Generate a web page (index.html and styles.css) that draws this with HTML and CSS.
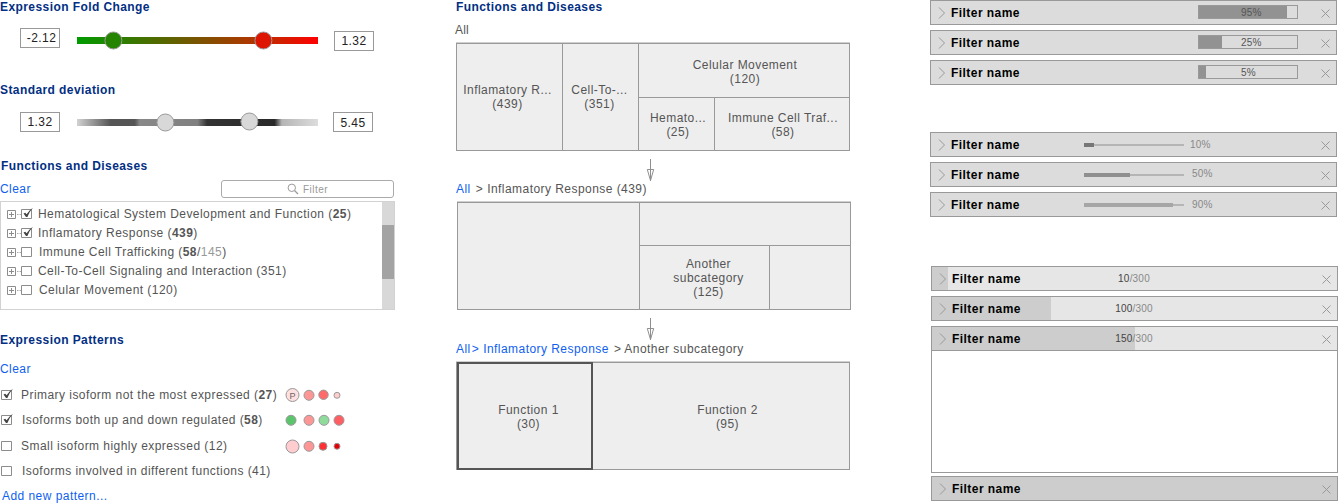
FILE: index.html
```
<!DOCTYPE html>
<html lang="en">
<head>
<meta charset="utf-8">
<title>Filters</title>
<link rel="stylesheet" href="styles.css">
</head>
<body>
<svg width="0" height="0" class="defs">
  <symbol id="plus" viewBox="0 0 14 10"><path d="M.5.5h8v8h-8zM2 4.5h5M4.500 2v5" fill="none" stroke="#8c8c8c"/><path d="M10 4.500h1.500M12.500 4.500h1.500" stroke="#aaa"/></symbol>
  <symbol id="box" viewBox="0 0 14 13"><path d="M.5 2.500h10v9h-10z" fill="#fff" stroke="#8c8c8c"/></symbol>
  <symbol id="checked" viewBox="0 0 14 13"><path d="M.5 2.500h10v9h-10z" fill="#fff" stroke="#8c8c8c"/><path d="M2.500 6.500L4.300 5.700 5.600 7.300Q8 3 12 .8 8.500 4.500 6.400 10H5Z" fill="#444"/></symbol>
  <symbol id="chev" viewBox="0 0 8 12"><path d="M1 .5L6.500 6 1 11.500" fill="none" stroke="#999"/></symbol>
  <symbol id="close" viewBox="0 0 9 9"><path d="M.5.5l8 8M8.500.5l-8 8" fill="none" stroke="#999"/></symbol>
  <symbol id="arrow" viewBox="0 0 9 23"><path d="M4.500 0v22M1.300 10.500h6.400L4.500 21.500z" fill="none" stroke="#8f8f8f"/></symbol>
</svg>
<main class="page">
  <div class="left">
    <h2>Expression Fold Change</h2>
    <div class="slider fold">
      <span class="value neg">-2.12</span>
      <svg class="track" width="243" height="20"><defs><linearGradient id="g1"><stop offset="0" stop-color="#009c00"/><stop offset=".2" stop-color="#317c00"/><stop offset=".75" stop-color="#b53300"/><stop offset="1" stop-color="#f00"/></linearGradient></defs><rect x="1" y="7" width="241" height="7" fill="url(#g1)"/><circle cx="37.400" cy="10.500" r="8.500" fill="#258500" stroke="#999"/><circle cx="187.400" cy="10.500" r="8.500" fill="#de1500" stroke="#999"/></svg>
      <span class="value low">1.32</span>
    </div>
    <h2>Standard deviation</h2>
    <div class="slider deviation">
      <span class="value">1.32</span>
      <svg class="track" width="243" height="20"><defs><linearGradient id="g2"><stop offset="0" stop-color="#d2d2d2"/><stop offset=".14" stop-color="#555"/><stop offset=".24" stop-color="#555"/><stop offset=".26" stop-color="#888"/><stop offset=".5" stop-color="#808080"/><stop offset=".54" stop-color="#333"/><stop offset=".82" stop-color="#292929"/><stop offset=".85" stop-color="#b5b5b5"/><stop offset="1" stop-color="#ddd"/></linearGradient></defs><rect x="1" y="7" width="241" height="7" fill="url(#g2)"/><circle cx="89.400" cy="10.500" r="8.500" fill="#d8d8d8" stroke="#999"/><circle cx="173.400" cy="9.500" r="8.500" fill="#d8d8d8" stroke="#999"/></svg>
      <span class="value right">5.45</span>
    </div>
    <h2 class="in1">Functions and Diseases</h2>
    <div class="toolbar">
      <a>Clear</a>
      <div class="search"><svg width="12" height="12"><circle cx="4.800" cy="4.800" r="3.700" fill="none" stroke="#999"/><path d="M7.500 7.500L11 11" stroke="#999" stroke-width="1.200"/></svg><span>Filter</span></div>
    </div>
    <div class="tree">
      <ul>
        <li><svg class="plus"><use href="#plus"/></svg><svg class="cb"><use href="#checked"/></svg><span>Hematological System Development and Function (<b>25</b>)</span></li>
        <li><svg class="plus"><use href="#plus"/></svg><svg class="cb"><use href="#checked"/></svg><span>Inflamatory Response (<b>439</b>)</span></li>
        <li><svg class="plus"><use href="#plus"/></svg><svg class="cb"><use href="#box"/></svg><span class="in1">Immune Cell Trafficking (<b>58</b>/<i>145</i>)</span></li>
        <li><svg class="plus"><use href="#plus"/></svg><svg class="cb"><use href="#box"/></svg><span>Cell-To-Cell Signaling and Interaction (351)</span></li>
        <li><svg class="plus"><use href="#plus"/></svg><svg class="cb"><use href="#box"/></svg><span class="in1">Celular Movement (120)</span></li>
      </ul>
      <div class="scroll"><div class="thumb"></div></div>
    </div>
    <h2>Expression Patterns</h2>
    <a class="clear">Clear</a>
    <div class="patterns">
      <div class="pattern"><svg class="cb"><use href="#checked"/></svg><span>Primary isoform not the most expressed (<b>27</b>)</span>
        <svg class="dots" width="64" height="16" stroke="#999"><circle cx="7.500" cy="8" r="6.500" fill="#ffe0e0"/><text x="4.400" y="11.500" class="p">P</text><circle cx="24" cy="8.300" r="5" fill="#ff9696"/><circle cx="38.500" cy="7.800" r="4.700" fill="#ff6b6b"/><circle cx="52" cy="8.300" r="3" fill="#ffcdcd"/></svg></div>
      <div class="pattern"><svg class="cb"><use href="#checked"/></svg><span class="in1">Isoforms both up and down regulated (<b>58</b>)</span>
        <svg class="dots" width="64" height="16" stroke="#999"><circle cx="6" cy="8.300" r="5" fill="#5bc56b"/><circle cx="24" cy="8.300" r="5" fill="#ff9696"/><circle cx="39" cy="8.300" r="5" fill="#8fdb9c"/><circle cx="54" cy="8.300" r="5" fill="#ff5f63"/></svg></div>
      <div class="pattern"><svg class="cb"><use href="#box"/></svg><span>Small isoform highly expressed (12)</span>
        <svg class="dots" width="64" height="16" stroke="#999"><circle cx="7.500" cy="8.500" r="6.500" fill="#ffcdcf"/><circle cx="24" cy="8.300" r="5" fill="#ff9696"/><circle cx="38" cy="8.300" r="4" fill="#ff3034"/><circle cx="52" cy="8.300" r="3" fill="#e80000"/></svg></div>
      <div class="pattern"><svg class="cb"><use href="#box"/></svg><span class="in1">Isoforms involved in different functions (41)</span></div>
    </div>
    <a class="add">Add new pattern...</a>
  </div>

  <div class="middle">
    <h2 class="in1">Functions and Diseases</h2>
    <p class="crumb all">All</p>
    <div class="map map1">
      <div class="cell a">Inflamatory R...<br>(439)</div><div class="cell b">Cell-To-...<br>(351)</div><div class="cell c">Celular Movement<br>(120)</div><div class="cell d">Hemato...<br>(25)</div><div class="cell e">Immune Cell Traf...<br>(58)</div>
    </div>
    <svg class="arrow"><use href="#arrow"/></svg>
    <p class="crumb"><a>All</a><span class="gap5">&gt;</span><span class="gap4">Inflamatory Response (439)</span></p>
    <div class="map map2">
      <div class="cell a"></div><div class="cell b"></div><div class="cell c">Another<br>subcategory<br>(125)</div><div class="cell d"></div>
    </div>
    <svg class="arrow second"><use href="#arrow"/></svg>
    <p class="crumb"><a>All</a><a class="gap2">&gt;</a><a class="gap4">Inflamatory Response</a><span class="gap5">&gt;</span><span class="gap3">Another subcategory</span></p>
    <div class="map map3">
      <div class="cell a">Function 1<br>(30)</div><div class="cell b">Function 2<br>(95)</div>
    </div>
  </div>

  <div class="right-col">
    <div class="group">
      <div class="bar"><svg class="chev"><use href="#chev"/></svg><b>Filter name</b><div class="meter"><div class="fill" style="width:88px"></div><span>95%</span></div><svg class="close"><use href="#close"/></svg></div>
      <div class="bar"><svg class="chev"><use href="#chev"/></svg><b>Filter name</b><div class="meter"><div class="fill" style="width:23px"></div><span>25%</span></div><svg class="close"><use href="#close"/></svg></div>
      <div class="bar"><svg class="chev"><use href="#chev"/></svg><b>Filter name</b><div class="meter"><div class="fill" style="width:7px"></div><span>5%</span></div><svg class="close"><use href="#close"/></svg></div>
    </div>
    <div class="group thin">
      <div class="bar"><svg class="chev"><use href="#chev"/></svg><b>Filter name</b><div class="line"><div style="width:10px;background:#777"></div></div><span class="pct">10%</span><svg class="close"><use href="#close"/></svg></div>
      <div class="bar"><svg class="chev"><use href="#chev"/></svg><b>Filter name</b><div class="line"><div style="width:46px;background:#8f8f8f"></div></div><span class="pct up">50%</span><svg class="close"><use href="#close"/></svg></div>
      <div class="bar"><svg class="chev"><use href="#chev"/></svg><b>Filter name</b><div class="line"><div style="width:89px;background:#a6a6a6"></div></div><span class="pct in">90%</span><svg class="close"><use href="#close"/></svg></div>
    </div>
    <div class="group counts">
      <div class="bar" style="--fill:16px"><svg class="chev"><use href="#chev"/></svg><b>Filter name</b><span class="count"><em>10</em>/300</span><svg class="close"><use href="#close"/></svg></div>
      <div class="bar" style="--fill:119px"><svg class="chev"><use href="#chev"/></svg><b>Filter name</b><span class="count"><em>100</em>/300</span><svg class="close"><use href="#close"/></svg></div>
      <div>
        <div class="bar" style="--fill:203px"><svg class="chev"><use href="#chev"/></svg><b>Filter name</b><span class="count"><em>150</em>/300</span><svg class="close"><use href="#close"/></svg></div>
        <div class="panel"></div>
      </div>
      <div class="bar last"><svg class="chev"><use href="#chev"/></svg><b>Filter name</b><svg class="close"><use href="#close"/></svg></div>
    </div>
  </div>
</main>
</body>
</html>
```
FILE: styles.css
```
* { box-sizing: border-box; }
body {
  margin: 0;
  font: 12px/14px "Liberation Sans", Arial, sans-serif;
  letter-spacing: 0.45px;
  color: #555;
  background: #fff;
  overflow: hidden;
}
svg { display: block; flex: none; }
.defs { position: absolute; }
h2 { margin: 0; font-size: 12px; line-height: 14px; letter-spacing: 0.42px; color: #022f83; white-space: nowrap; }
a { color: #0f5ff0; }
p { margin: 0; }
i, em { font-style: normal; }
.in1 { padding-left: 1px; }
.page { display: grid; grid-template-columns: 455px 475px 408px; height: 503px; }

/* Left column */
.left { width: 395px; }
.slider { display: flex; padding-left: 20px; }
.slider.fold { height: 55px; margin: 14px 0 0; }
.slider.deviation { height: 47px; margin-top: 15px; }
.value {
  width: 40px; height: 20px; flex: none;
  border: 1px solid #999; background: #fff; color: #222;
  text-align: center; line-height: 18px;
}
.value.neg { padding-left: 3px; }
.value.low { margin: 3px 0 0 15px; }
.value.right { margin-left: 14px; line-height: 20px; }
.track { margin: 2px 0 0 16px; }
.deviation .track { margin-top: 0; }
.toolbar { display: flex; justify-content: space-between; height: 28px; padding: 7px 1px 0 0; }
.toolbar a { padding-top: 2px; }
.search {
  display: flex; align-items: center; gap: 4px;
  width: 173px; height: 18px; padding-left: 65px;
  border: 1px solid #aaa; border-radius: 3px;
  font-size: 10px; letter-spacing: 0.45px; color: #999;
}
.search span { padding-top: 1px; }
.tree { display: flex; height: 109px; border: 1px solid #d2d2d2; }
.tree ul { flex: 1; margin: 0; padding: 3px 0 0 6px; list-style: none; }
.tree li { display: flex; height: 19px; padding-top: 2px; white-space: nowrap; }
.tree i { color: #999; }
.plus { width: 14px; height: 10px; margin-top: 3px; }
.cb { width: 14px; height: 13px; }
.tree li span { margin-left: 3px; }
.scroll { width: 12px; padding-top: 23px; background: #d8d8d8; }
.thumb { height: 54px; background: #a3a3a3; }
.tree + h2 { margin-top: 23px; }
.clear { display: block; margin-top: 15px; }
.patterns { display: grid; grid-template-rows: 25px 26px 25px 25px; margin-top: 12px; }
.pattern { display: grid; grid-template-columns: 20px 264px 64px; padding-left: 1px; white-space: nowrap; }
.patterns .dots { margin-top: -1px; }
.p { font-size: 9px; letter-spacing: 0; fill: #666; stroke: none; }
.add { display: block; padding-left: 2px; }

/* Category maps */
.crumb { display: flex; height: 20px; padding-left: 1px; white-space: nowrap; }
.crumb.all { height: 19px; margin-top: 9px; padding-left: 0; letter-spacing: 0.2px; }
.gap2 { margin-left: 1px; }
.gap3 { margin-left: 3px; }
.gap4 { margin-left: 4px; }
.gap5 { margin-left: 5px; }
.map {
  display: grid; gap: 1px; width: 394px; height: 108px; margin-left: 1px;
  border: 1px solid #999; background: #999;
  box-shadow: 0 -1px #d0d0d0;
}
.cell { display: grid; place-content: center; padding-top: 1px; background: #eee; text-align: center; white-space: nowrap; }
.map1 { margin-top: 1px; grid-template-columns: 105px 75px 75px 1fr; grid-template-rows: 53px 1fr; }
.map1 .a, .map1 .b { grid-row: 1 / 3; padding-top: 0; }
.map1 .a { padding-right: 4px; }
.map1 .b { padding-right: 2px; }
.map1 .c { grid-column: 3 / 5; padding: 3px 0 0 2px; }
.map1 .d { padding-left: 3px; }
.map1 .e { padding-left: 2px; }
.map2 { margin: 0 0 0 2px; grid-template-columns: 181px 129px 1fr; grid-template-rows: 42px 1fr; }
.map2 .a { grid-row: 1 / 3; }
.map2 .b { grid-column: 2 / 4; }
.map2 .c { padding: 1px 0 0 8px; }
.map3 { grid-template-columns: 136px 1fr; gap: 0; }
.map3 .a { margin: -1px 0 -1px; border: 2px solid #555; padding: 1px 0 0 7px; }
.map3 .b { padding-left: 13px; }
.arrow { width: 9px; height: 23px; margin: 8px 0 0 191px; }
.arrow.second { margin-bottom: 1px; }

/* Filter bars */
.group { display: grid; gap: 5px; }
.thin { margin-top: 47px; }
.counts { margin: 49px 0 0 1px; }
.bar {
  display: flex; position: relative; width: 407px; height: 25px;
  border: 1px solid #999; background: #dcdcdc;
}
.bar b { margin: 5px 0 0 5px; color: #000; white-space: nowrap; width: 110px; }
.chev { width: 8px; height: 12px; margin: 6px 0 0 7px; }
.close { width: 9px; height: 9px; margin: 8px 6px 0 auto; }
.meter { display: grid; grid-template-rows: 12px; width: 100px; height: 14px; margin: 4px 0 0 137px; border: 1px solid #999; font-size: 10px; line-height: 14px; }
.meter .fill, .meter span { grid-area: 1 / 1; }
.meter .fill { background: #929292; }
.meter span { padding-left: 42px; letter-spacing: 0.2px; }
.line { width: 100px; height: 2px; margin: 11px 0 0 23px; background: #b5b5b5; }
.line div { height: 4px; margin-top: -1px; }
.pct { margin: 5px 0 0 6px; font-size: 10px; color: #888; letter-spacing: 0.2px; }
.pct.in, .pct.up { margin-left: 8px; }
.pct.up { margin-top: 4px; }
.counts .bar { background: linear-gradient(#cdcdcd, #cdcdcd) 0 0 / var(--fill) 100% no-repeat #e6e6e6; }
.counts .bar.last { background: #cdcdcd; }
.count { width: 70px; margin: 5px 0 0 37px; text-align: center; font-size: 10px; color: #888; letter-spacing: 0.2px; }
.count em { color: #444; }
.panel { width: 407px; height: 122px; border: 1px solid #999; border-top: 0; }
.last { margin-top: -2px; }
```
